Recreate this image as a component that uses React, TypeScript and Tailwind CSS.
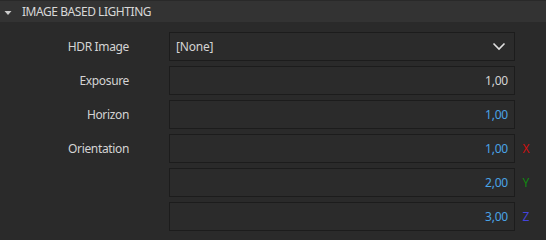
import React from "react";

const font = { fontFamily: '"Noto Sans", "Open Sans", sans-serif' };

function Row({ label, value, axis, axisColor, blue }: { label?: string; value: string; axis?: string; axisColor?: string; blue?: boolean }) {
  return (
    <div className="flex h-[29px] items-center">
      <div className="w-[129px] shrink-0 text-right text-[12px] tracking-[-0.35px] text-[#d4d4d4]">{label}</div>
      <div className="ml-[40px] flex h-full w-[346px] shrink-0 items-center justify-end border border-[#1c1c1c] bg-[#2b2b2b] pr-[6px]">
        <span className={`text-[12px] tracking-[-0.2px] ${blue ? "text-[#4aa3e6]" : "text-[#d4d4d4]"}`}>{value}</span>
      </div>
      <div className={`w-[22px] text-center text-[12px] ${axisColor ?? ""}`}>{axis}</div>
    </div>
  );
}

export default function App() {
  return (
    <div className="h-[240px] w-[546px] overflow-hidden bg-[#2a2a2a]" style={font}>
      <div className="flex h-[22px] items-center border-t border-[#292929] bg-[#333333]">
        <svg width="22" height="21" viewBox="0 0 22 21" className="shrink-0">
          <polygon points="4.5,10 11.5,10 8,14" fill="#cccccc" />
        </svg>
        <span className="text-[12px] tracking-[-0.45px] text-[#d8d8d8]">IMAGE BASED LIGHTING</span>
      </div>
      <div className="flex flex-col gap-[5px] pt-[10px]">
        <div className="flex h-[29px] items-center">
          <div className="w-[129px] shrink-0 text-right text-[12px] tracking-[-0.35px] text-[#d4d4d4]">HDR Image</div>
          <div className="ml-[40px] flex h-full w-[346px] shrink-0 items-center justify-between border border-[#1c1c1c] bg-[#2b2b2b] pl-[6px] pr-[8px]">
            <span className="text-[12px] tracking-[-0.2px] text-[#d4d4d4]">[None]</span>
            <svg width="14" height="9" viewBox="0 0 14 9">
              <polyline points="1.5,1.5 7,7 12.5,1.5" fill="none" stroke="#e0e0e0" strokeWidth="1.6" />
            </svg>
          </div>
        </div>
        <Row label="Exposure" value="1,00" />
        <Row label="Horizon" value="1,00" blue />
        <Row label="Orientation" value="1,00" blue axis="X" axisColor="text-[#cc1111]" />
        <Row value="2,00" blue axis="Y" axisColor="text-[#118811]" />
        <Row value="3,00" blue axis="Z" axisColor="text-[#4444dd]" />
      </div>
    </div>
  );
}
